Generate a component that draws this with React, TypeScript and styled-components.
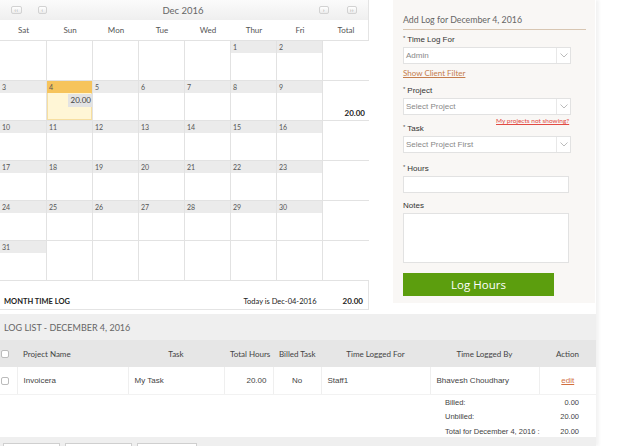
import React from "react";
import styled, { createGlobalStyle, css } from "styled-components";

const GlobalStyle = createGlobalStyle`
  html, body { margin: 0; padding: 0; background: #ffffff; }
  body { font-family: "Lato", "Liberation Sans", sans-serif; color: #333; }
  * { box-sizing: border-box; }
`;

const Page = styled.div`
  width: 596px;
  height: 446px;
  overflow: hidden;
  box-shadow: 3px 0 3px rgba(0, 0, 0, 0.05);
`;

const Top = styled.div`
  display: flex;
  align-items: flex-start;
  height: 314px;
`;

/* ---------- Calendar ---------- */
const Calendar = styled.div`
  width: 369px;
  height: 310px;
  border-right: 1px solid #e4e4e4;
  border-bottom: 1px solid #e4e4e4;
  display: flex;
  flex-direction: column;
`;

const CalHeader = styled.div`
  height: 20px;
  display: flex;
  align-items: center;
  padding: 0 11px;
  background: linear-gradient(#fbfbfb, #efefef);
`;

const NavBtn = styled.div<{ $w: number; $ml?: number }>`
  width: ${(p) => p.$w}px;
  height: 8px;
  margin-left: ${(p) => p.$ml ?? 0}px;
  border: 1px solid #d2d2d2;
  border-radius: 2px;
  background: linear-gradient(#ffffff, #ececec);
  display: flex;
  align-items: center;
  justify-content: center;
  font-size: 5px;
  line-height: 1;
  color: #888;
  letter-spacing: 0.5px;
`;

const CalTitle = styled.div`
  flex: 1;
  text-align: center;
  font-size: 9.5px;
  color: #666;
`;

const Grid = styled.div`
  display: grid;
  grid-template-columns: 47px repeat(7, 46px);
`;

const DayName = styled.div`
  height: 21px;
  border-bottom: 1px solid #e2e2e2;
  display: flex;
  align-items: center;
  justify-content: center;
  font-size: 8px;
  color: #555;
`;

const Cell = styled.div<{ $today?: boolean }>`
  height: 40px;
  border-right: 1px solid #e2e2e2;
  border-bottom: 1px solid #e2e2e2;
  display: flex;
  flex-direction: column;
  background: ${(p) => (p.$today ? "#fff6d6" : "#ffffff")};
  ${(p) =>
    p.$today &&
    css`
      box-shadow: inset 0 0 0 1px #f7dfa0;
    `}
  &:nth-child(8n) {
    border-right: none;
  }
`;

const DayBand = styled.div<{ $today?: boolean }>`
  height: 12px;
  background: ${(p) => (p.$today ? "#f6c45c" : "#ebebeb")};
  font-size: 7px;
  line-height: 12px;
  padding-left: 2px;
  color: #555;
`;

const HoursTag = styled.div`
  align-self: flex-end;
  margin-top: 1px;
  background: #e3e3e3;
  font-size: 8px;
  color: #444;
  padding: 1px 1px 1px 3px;
  line-height: 11px;
`;

const WeekTotal = styled.div`
  margin-top: auto;
  align-self: flex-end;
  font-size: 8px;
  font-weight: 700;
  color: #222;
  padding: 0 4px 2px 0;
`;

const CalFooter = styled.div`
  flex: 1;
  display: flex;
  align-items: flex-end;
  padding: 0 5px 3px 4px;
  font-size: 7.5px;
  color: #222;
`;

const FooterLeft = styled.div`
  flex: 1;
  font-weight: 700;
  text-transform: uppercase;
`;

const FooterToday = styled.div`
  font-size: 7.5px;
  margin-right: 26px;
`;

const FooterTotal = styled.div`
  font-size: 8px;
  font-weight: 700;
`;

/* ---------- Panel ---------- */
const Panel = styled.div`
  margin-left: 24px;
  width: 202px;
  height: 303px;
  background: #f9f7f5;
  padding: 14px 9px 0 10px;
  display: flex;
  flex-direction: column;
`;

const PanelTitle = styled.div`
  font-size: 8.8px;
  line-height: 12px;
  color: #666;
  padding-bottom: 3px;
  border-bottom: 1px solid #d8c6b2;
  margin-bottom: 5px;
  white-space: nowrap;
`;

const Label = styled.div<{ $mt?: number }>`
  font-family: "Liberation Sans", Arial, sans-serif;
  font-size: 8px;
  color: #333;
  height: 10px;
  line-height: 10px;
  margin-top: ${(p) => p.$mt ?? 0}px;
  margin-bottom: 2px;
`;

const Star = styled.span`
  font-size: 6px;
  line-height: 0;
  position: relative;
  top: -2px;
  margin-right: 2px;
  color: #555;
`;

const Select = styled.div`
  width: 168px;
  height: 17px;
  flex: none;
  background: #fff;
  border: 1px solid #e2e2e2;
  display: flex;
  align-items: center;
  font-family: "Liberation Sans", Arial, sans-serif;
  font-size: 8px;
  color: #888;
`;

const SelectText = styled.div`
  flex: 1;
  padding-left: 2px;
`;

const Chevron = styled.div`
  width: 14px;
  height: 100%;
  border-left: 1px solid #e8e8e8;
  display: flex;
  align-items: center;
  justify-content: center;
`;

const FilterLink = styled.a`
  align-self: flex-start;
  font-size: 8px;
  height: 10px;
  color: #c57d4c;
  text-decoration: underline;
  margin-top: 4px;
  line-height: 10px;
`;

const RedLink = styled.a`
  align-self: flex-start;
  margin-left: 93px;
  font-size: 6.5px;
  color: #e24b43;
  text-decoration: underline;
  margin-top: 2px;
  height: 8px;
  line-height: 8px;
`;

const Input = styled.div<{ $h: number }>`
  width: 166px;
  flex: none;
  height: ${(p) => p.$h}px;
  background: #fff;
  border: 1px solid #e2e2e2;
`;

const LogButton = styled.div`
  margin-top: 10px;
  width: 151px;
  height: 23px;
  flex: none;
  background: #5c9e0e;
  color: #fff;
  font-family: "Open Sans", sans-serif;
  font-size: 11.5px;
  display: flex;
  align-items: center;
  justify-content: center;
`;

/* ---------- Log list ---------- */
const LogSection = styled.div`
  background: #efefef;
  height: 132px;
`;

const LogTitle = styled.div`
  height: 26px;
  padding-left: 4px;
  display: flex;
  align-items: center;
  font-size: 9px;
  color: #666;
  text-transform: uppercase;
`;

const Table = styled.table`
  width: 596px;
  border-collapse: collapse;
  table-layout: fixed;
  font-family: "Liberation Sans", Arial, sans-serif;
  font-size: 8px;
`;

const Th = styled.th<{ $align?: string }>`
  height: 27px;
  background: #e6e6e6;
  font-weight: 400;
  color: #444;
  font-family: "Lato", sans-serif;
  text-align: ${(p) => p.$align ?? "center"};
  padding: 0 6px;
  white-space: nowrap;
`;

const Td = styled.td<{ $align?: string }>`
  height: 27px;
  background: #fff;
  color: #444;
  border-left: 1px solid #efefef;
  text-align: ${(p) => p.$align ?? "left"};
  padding: 0 6px;
  white-space: nowrap;
  &:first-child {
    border-left: none;
  }
`;

const Check = styled.span`
  display: inline-block;
  width: 8px;
  height: 8px;
  border: 1px solid #bbb;
  border-radius: 2px;
  background: #fff;
  vertical-align: middle;
`;

const CheckCell = styled.div`
  margin-left: -5px;
`;

const EditLink = styled.a`
  color: #d2703f;
  text-decoration: underline;
`;

const Summary = styled.div`
  background: #fff;
  height: 43px;
  border-top: 1px solid #f2f2f2;
  display: grid;
  grid-template-columns: 100px 34px;
  grid-auto-rows: 14.5px;
  align-content: start;
  align-items: center;
  padding: 0 0 0 445px;
  font-family: "Liberation Sans", Arial, sans-serif;
  font-size: 7.5px;
  color: #444;
  white-space: nowrap;
`;

const SumVal = styled.div`
  text-align: right;
`;

const ButtonBar = styled.div`
  display: flex;
  gap: 5px;
  padding: 6px 0 0 3px;
`;

const GhostBtn = styled.div<{ $w: number }>`
  width: ${(p) => p.$w}px;
  height: 14px;
  border: 1px solid #cfcfcf;
  background: #fff;
`;

const weeks: (number | null)[][] = [
  [null, null, null, null, null, 1, 2],
  [3, 4, 5, 6, 7, 8, 9],
  [10, 11, 12, 13, 14, 15, 16],
  [17, 18, 19, 20, 21, 22, 23],
  [24, 25, 26, 27, 28, 29, 30],
  [31, null, null, null, null, null, null],
];

const ChevronIcon = () => (
  <svg width="8" height="5" viewBox="0 0 8 5">
    <path d="M0.5 0.5 L4 4 L7.5 0.5" fill="none" stroke="#aaa" strokeWidth="0.8" />
  </svg>
);

export default function App() {
  return (
    <>
      <GlobalStyle />
      <Page>
        <Top>
          <Calendar>
            <CalHeader>
              <NavBtn $w={11}>‹‹</NavBtn>
              <NavBtn $w={9} $ml={16}>‹</NavBtn>
              <CalTitle>Dec 2016</CalTitle>
              <NavBtn $w={10}>›</NavBtn>
              <NavBtn $w={10} $ml={18}>››</NavBtn>
            </CalHeader>
            <Grid>
              {["Sat", "Sun", "Mon", "Tue", "Wed", "Thur", "Fri", "Total"].map((d) => (
                <DayName key={d}>{d}</DayName>
              ))}
              {weeks.map((w, wi) => (
                <React.Fragment key={wi}>
                  {w.map((d, di) => (
                    <Cell key={di} $today={d === 4}>
                      {d !== null && <DayBand $today={d === 4}>{d}</DayBand>}
                      {d === 4 && <HoursTag>20.00</HoursTag>}
                    </Cell>
                  ))}
                  <Cell>{wi === 1 && <WeekTotal>20.00</WeekTotal>}</Cell>
                </React.Fragment>
              ))}
            </Grid>
            <CalFooter>
              <FooterLeft>Month Time Log</FooterLeft>
              <FooterToday>Today is Dec-04-2016</FooterToday>
              <FooterTotal>20.00</FooterTotal>
            </CalFooter>
          </Calendar>
          <Panel>
            <PanelTitle>Add Log for December 4, 2016</PanelTitle>
            <Label>
              <Star>*</Star>Time Log For
            </Label>
            <Select>
              <SelectText>Admin</SelectText>
              <Chevron>
                <ChevronIcon />
              </Chevron>
            </Select>
            <FilterLink>Show Client Filter</FilterLink>
            <Label $mt={8}>
              <Star>*</Star>Project
            </Label>
            <Select>
              <SelectText>Select Project</SelectText>
              <Chevron>
                <ChevronIcon />
              </Chevron>
            </Select>
            <RedLink>My projects not showing?</RedLink>
            <Label $mt={-1}>
              <Star>*</Star>Task
            </Label>
            <Select>
              <SelectText>Select Project First</SelectText>
              <Chevron>
                <ChevronIcon />
              </Chevron>
            </Select>
            <Label $mt={11}>
              <Star>*</Star>Hours
            </Label>
            <Input $h={17} />
            <Label $mt={8}>Notes</Label>
            <Input $h={50} />
            <LogButton>Log Hours</LogButton>
          </Panel>
        </Top>
        <LogSection>
          <LogTitle>Log List - December 4, 2016</LogTitle>
          <Table>
            <colgroup>
              <col style={{ width: 17 }} />
              <col style={{ width: 111 }} />
              <col style={{ width: 96 }} />
              <col style={{ width: 49 }} />
              <col style={{ width: 48 }} />
              <col style={{ width: 109 }} />
              <col style={{ width: 109 }} />
              <col style={{ width: 57 }} />
            </colgroup>
            <thead>
              <tr>
                <Th $align="left">
                  <CheckCell>
                    <Check />
                  </CheckCell>
                </Th>
                <Th $align="left">Project Name</Th>
                <Th>Task</Th>
                <Th>Total Hours</Th>
                <Th>Billed Task</Th>
                <Th>Time Logged For</Th>
                <Th>Time Logged By</Th>
                <Th>Action</Th>
              </tr>
            </thead>
            <tbody>
              <tr>
                <Td>
                  <CheckCell>
                    <Check />
                  </CheckCell>
                </Td>
                <Td>Invoicera</Td>
                <Td>My Task</Td>
                <Td $align="right">20.00</Td>
                <Td $align="center">No</Td>
                <Td>Staff1</Td>
                <Td>Bhavesh Choudhary</Td>
                <Td $align="center">
                  <EditLink>edit</EditLink>
                </Td>
              </tr>
            </tbody>
          </Table>
          <Summary>
            <div>Billed:</div>
            <SumVal>0.00</SumVal>
            <div>Unbilled:</div>
            <SumVal>20.00</SumVal>
            <div>Total for December 4, 2016 :</div>
            <SumVal>20.00</SumVal>
          </Summary>
          <ButtonBar>
            <GhostBtn $w={57} />
            <GhostBtn $w={67} />
            <GhostBtn $w={60} />
          </ButtonBar>
        </LogSection>
      </Page>
    </>
  );
}
